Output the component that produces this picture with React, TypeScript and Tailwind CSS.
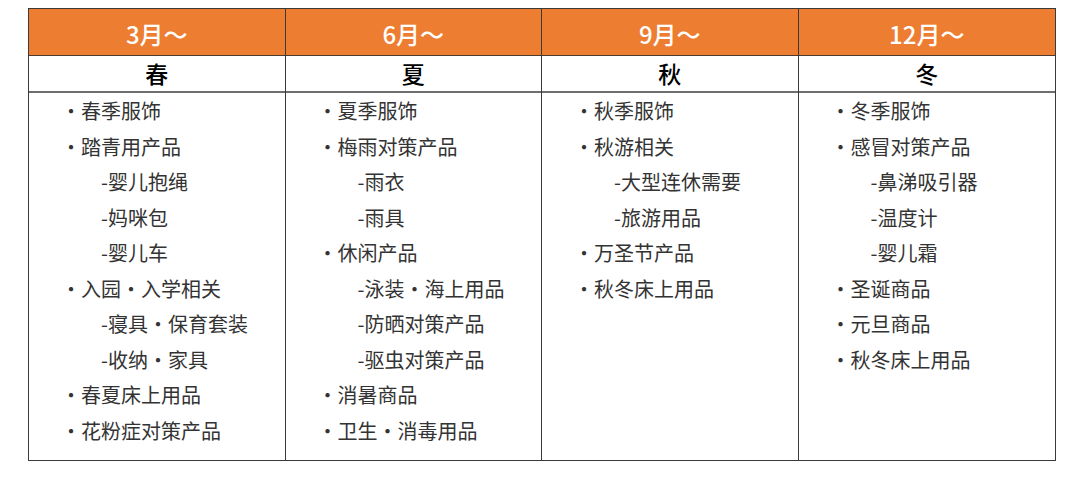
type Item = { text: string; sub?: boolean };

const columns: { month: string; season: string; items: Item[] }[] = [
  {
    month: "3月～",
    season: "春",
    items: [
      { text: "春季服饰" },
      { text: "踏青用产品" },
      { text: "-婴儿抱绳", sub: true },
      { text: "-妈咪包", sub: true },
      { text: "-婴儿车", sub: true },
      { text: "入园・入学相关" },
      { text: "-寝具・保育套装", sub: true },
      { text: "-收纳・家具", sub: true },
      { text: "春夏床上用品" },
      { text: "花粉症对策产品" },
    ],
  },
  {
    month: "6月～",
    season: "夏",
    items: [
      { text: "夏季服饰" },
      { text: "梅雨对策产品" },
      { text: "-雨衣", sub: true },
      { text: "-雨具", sub: true },
      { text: "休闲产品" },
      { text: "-泳装・海上用品", sub: true },
      { text: "-防晒对策产品", sub: true },
      { text: "-驱虫对策产品", sub: true },
      { text: "消暑商品" },
      { text: "卫生・消毒用品" },
    ],
  },
  {
    month: "9月～",
    season: "秋",
    items: [
      { text: "秋季服饰" },
      { text: "秋游相关" },
      { text: "-大型连休需要", sub: true },
      { text: "-旅游用品", sub: true },
      { text: "万圣节产品" },
      { text: "秋冬床上用品" },
    ],
  },
  {
    month: "12月～",
    season: "冬",
    items: [
      { text: "冬季服饰" },
      { text: "感冒对策产品" },
      { text: "-鼻涕吸引器", sub: true },
      { text: "-温度计", sub: true },
      { text: "-婴儿霜", sub: true },
      { text: "圣诞商品" },
      { text: "元旦商品" },
      { text: "秋冬床上用品" },
    ],
  },
];

export default function App() {
  return (
    <div
      className="w-[1080px] h-[487px] bg-white pt-[8px] pl-[28px]"
      style={{ fontFamily: '"Noto Sans CJK SC", "Noto Sans", sans-serif' }}
    >
      <div className="w-[1028px] h-[453px] border border-[#3a3a3a] grid grid-cols-4 divide-x divide-[#3a3a3a]">
        {columns.map((col) => (
          <div key={col.month} className="flex flex-col">
            <div className="h-[47px] bg-[#ed7d31] border-b border-[#4a3a30] flex items-center justify-center pt-[4px]">
              <span className="text-[24px] font-medium text-white leading-none">{col.month}</span>
            </div>
            <div className="h-[37px] border-b-2 border-[#6e6e6e] flex items-center justify-center">
              <span className="text-[23px] font-medium text-black leading-none">{col.season}</span>
            </div>
            <ul className="flex-1 text-[20px] text-[#333] leading-[35.5px]">
              {col.items.map((it, i) =>
                it.sub ? (
                  <li key={i} className="pl-[72px]">
                    {it.text}
                  </li>
                ) : (
                  <li key={i} className="pl-[32px]">
                    ・{it.text}
                  </li>
                )
              )}
            </ul>
          </div>
        ))}
      </div>
    </div>
  );
}
